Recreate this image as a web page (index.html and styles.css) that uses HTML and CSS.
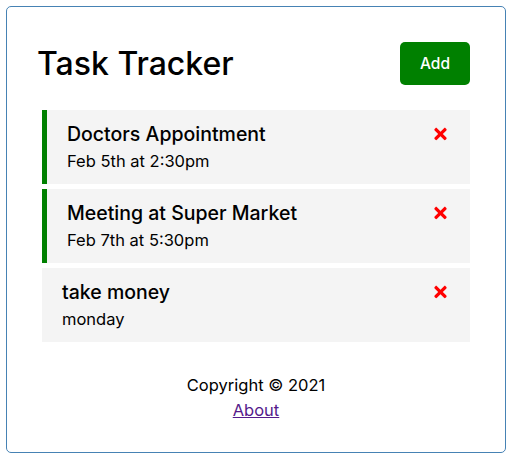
FILE: index.html
```html
<!DOCTYPE html>
<html lang="en">
<head>
<meta charset="utf-8">
<title>Task Tracker</title>
<link rel="stylesheet" href="styles.css">
</head>
<body>
<div class="container">
  <header class="header">
    <h1 class="title">Task Tracker</h1>
    <button class="btn">Add</button>
  </header>
  <div class="tasks">
    <div class="task reminder">
      <h3 class="task-title">Doctors Appointment
        <svg class="del" viewBox="0 0 352 512"><path d="M242.72 256l100.07-100.07c12.28-12.28 12.28-32.19 0-44.48l-22.24-22.24c-12.28-12.28-32.19-12.28-44.48 0L176 189.28 75.93 89.21c-12.28-12.28-32.19-12.28-44.48 0L9.21 111.45c-12.28 12.28-12.28 32.19 0 44.48L109.28 256 9.21 356.07c-12.28 12.28-12.28 32.19 0 44.48l22.24 22.24c12.28 12.28 32.2 12.28 44.48 0L176 322.72l100.07 100.07c12.28 12.28 32.2 12.28 44.48 0l22.24-22.24c12.28-12.28 12.28-32.19 0-44.48L242.72 256z"/></svg>
      </h3>
      <p class="task-day">Feb 5th at 2:30pm</p>
    </div>
    <div class="task reminder">
      <h3 class="task-title">Meeting at Super Market
        <svg class="del" viewBox="0 0 352 512"><path d="M242.72 256l100.07-100.07c12.28-12.28 12.28-32.19 0-44.48l-22.24-22.24c-12.28-12.28-32.19-12.28-44.48 0L176 189.28 75.93 89.21c-12.28-12.28-32.19-12.28-44.48 0L9.21 111.45c-12.28 12.28-12.28 32.19 0 44.48L109.28 256 9.21 356.07c-12.28 12.28-12.28 32.19 0 44.48l22.24 22.24c12.28 12.28 32.2 12.28 44.48 0L176 322.72l100.07 100.07c12.28 12.28 32.2 12.28 44.48 0l22.24-22.24c12.28-12.28 12.28-32.19 0-44.48L242.72 256z"/></svg>
      </h3>
      <p class="task-day">Feb 7th at 5:30pm</p>
    </div>
    <div class="task">
      <h3 class="task-title">take money
        <svg class="del" viewBox="0 0 352 512"><path d="M242.72 256l100.07-100.07c12.28-12.28 12.28-32.19 0-44.48l-22.24-22.24c-12.28-12.28-32.19-12.28-44.48 0L176 189.28 75.93 89.21c-12.28-12.28-32.19-12.28-44.48 0L9.21 111.45c-12.28 12.28-12.28 32.19 0 44.48L109.28 256 9.21 356.07c-12.28 12.28-12.28 32.19 0 44.48l22.24 22.24c12.28 12.28 32.2 12.28 44.48 0L176 322.72l100.07 100.07c12.28 12.28 32.2 12.28 44.48 0l22.24-22.24c12.28-12.28 12.28-32.19 0-44.48L242.72 256z"/></svg>
      </h3>
      <p class="task-day">monday</p>
    </div>
  </div>
  <footer class="footer">
    <p class="copy">Copyright &copy; 2021</p>
    <a class="about" href="#about">About</a>
  </footer>
</div>
</body>
</html>
```

FILE: styles.css
```css
* {
  box-sizing: border-box;
}

body {
  margin: 0;
  font-family: Inter, "Open Sans", sans-serif;
  background: #fff;
  color: #000;
}

.container {
  width: 500px;
  margin: 6px 0 0 6px;
  border: 1px solid steelblue;
  border-radius: 5px;
  padding: 30px;
  min-height: 446px;
}

.header {
  display: flex;
  justify-content: space-between;
  align-items: center;
  margin-bottom: 20px;
}

.title {
  margin: 0;
  font-size: 32px;
  font-weight: 500;
}

.btn {
  background: green;
  color: #fff;
  border: none;
  border-radius: 5px;
  margin: 5px;
  width: 70px;
  height: 43px;
  font-family: inherit;
  font-size: 15.5px;
  font-weight: 500;
}

.task {
  background: #f4f4f4;
  margin: 5px;
  padding: 10px 20px;
}

.reminder {
  border-left: 5px solid green;
}

.task-title {
  display: flex;
  justify-content: space-between;
  align-items: center;
  margin: 0;
  font-size: 19.5px;
  font-weight: 500;
  line-height: 28px;
}

.del {
  width: 13px;
  height: 18px;
  fill: red;
  margin-right: 3px;
}

.task-day {
  margin: 0;
  font-size: 16.5px;
  line-height: 26px;
}

.footer {
  margin-top: 30px;
  text-align: center;
  font-size: 16.5px;
}

.copy {
  margin: 0;
  line-height: 26px;
}

.about {
  color: #551a8b;
  line-height: 24px;
}
```
